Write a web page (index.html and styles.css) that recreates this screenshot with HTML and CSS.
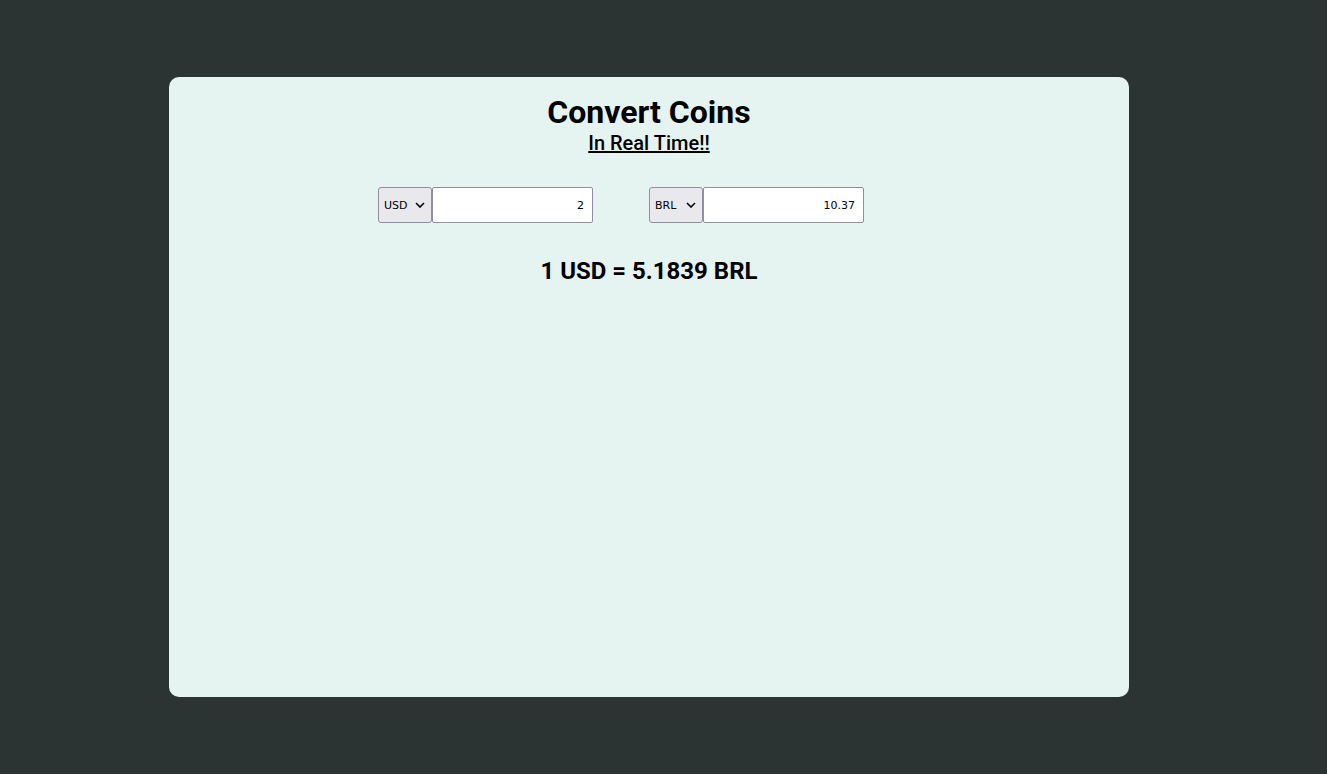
FILE: index.html
```html
<!DOCTYPE html>
<html>
<head>
<meta charset="utf-8">
<link rel="stylesheet" href="styles.css">
</head>
<body>
<main class="card">
  <h1 class="title">Convert Coins</h1>
  <h2 class="subtitle">In Real Time!!</h2>
  <div class="converter">
    <div class="group">
      <select class="currency"><option>USD</option></select>
      <input class="amount" type="text" value="2">
    </div>
    <div class="group">
      <select class="currency"><option>BRL</option></select>
      <input class="amount" type="text" value="10.37">
    </div>
  </div>
  <p class="rate">1 USD = 5.1839 BRL</p>
</main>
</body>
</html>
```
FILE: styles.css
```css
html, body {
  margin: 0;
  padding: 0;
}
body {
  background: #2c3333;
  font-family: Roboto, "Liberation Sans", sans-serif;
  height: 774px;
  box-sizing: border-box;
  padding-top: 77px;
}
.card {
  width: 960px;
  height: 620px;
  margin-left: 169px;
  background: #e6f4f1;
  border-radius: 10px;
  display: flex;
  flex-direction: column;
  align-items: center;
  box-sizing: border-box;
  padding-top: 16px;
}
.title {
  margin: 0;
  font-size: 32px;
  font-weight: 700;
  line-height: 38px;
  color: #000;
}
.subtitle {
  margin: 0;
  font-size: 20px;
  font-weight: 500;
  line-height: 24px;
  text-decoration: underline;
  color: #000;
}
.converter {
  display: flex;
  justify-content: center;
  margin-top: 32px;
}
.group {
  display: flex;
  margin-right: 56px;
}
.currency {
  -webkit-appearance: none;
  appearance: none;
  width: 54px;
  height: 36px;
  box-sizing: border-box;
  font-family: "DejaVu Sans", sans-serif;
  font-size: 11px;
  background-color: #e9e9ed;
  background-image: url("data:image/svg+xml,%3Csvg xmlns='http://www.w3.org/2000/svg' width='10' height='6' viewBox='0 0 10 6'%3E%3Cpath d='M1 1l4 4 4-4' fill='none' stroke='%23000' stroke-width='1.6'/%3E%3C/svg%3E");
  background-repeat: no-repeat;
  background-position: right 6px center;
  border: 1px solid #8f8f9d;
  border-radius: 3px;
  color: #000;
  padding: 0 0 0 5px;
  margin: 0;
}
.amount {
  width: 161px;
  height: 36px;
  box-sizing: border-box;
  font-family: "DejaVu Sans", sans-serif;
  font-size: 11px;
  text-align: right;
  border: 1px solid #8f8f9d;
  border-radius: 2px;
  background: #fff;
  padding: 0 8px;
  margin: 0;
}
.rate {
  margin: 34px 0 0;
  font-size: 24px;
  font-weight: 700;
  line-height: 28px;
  color: #000;
}
```
